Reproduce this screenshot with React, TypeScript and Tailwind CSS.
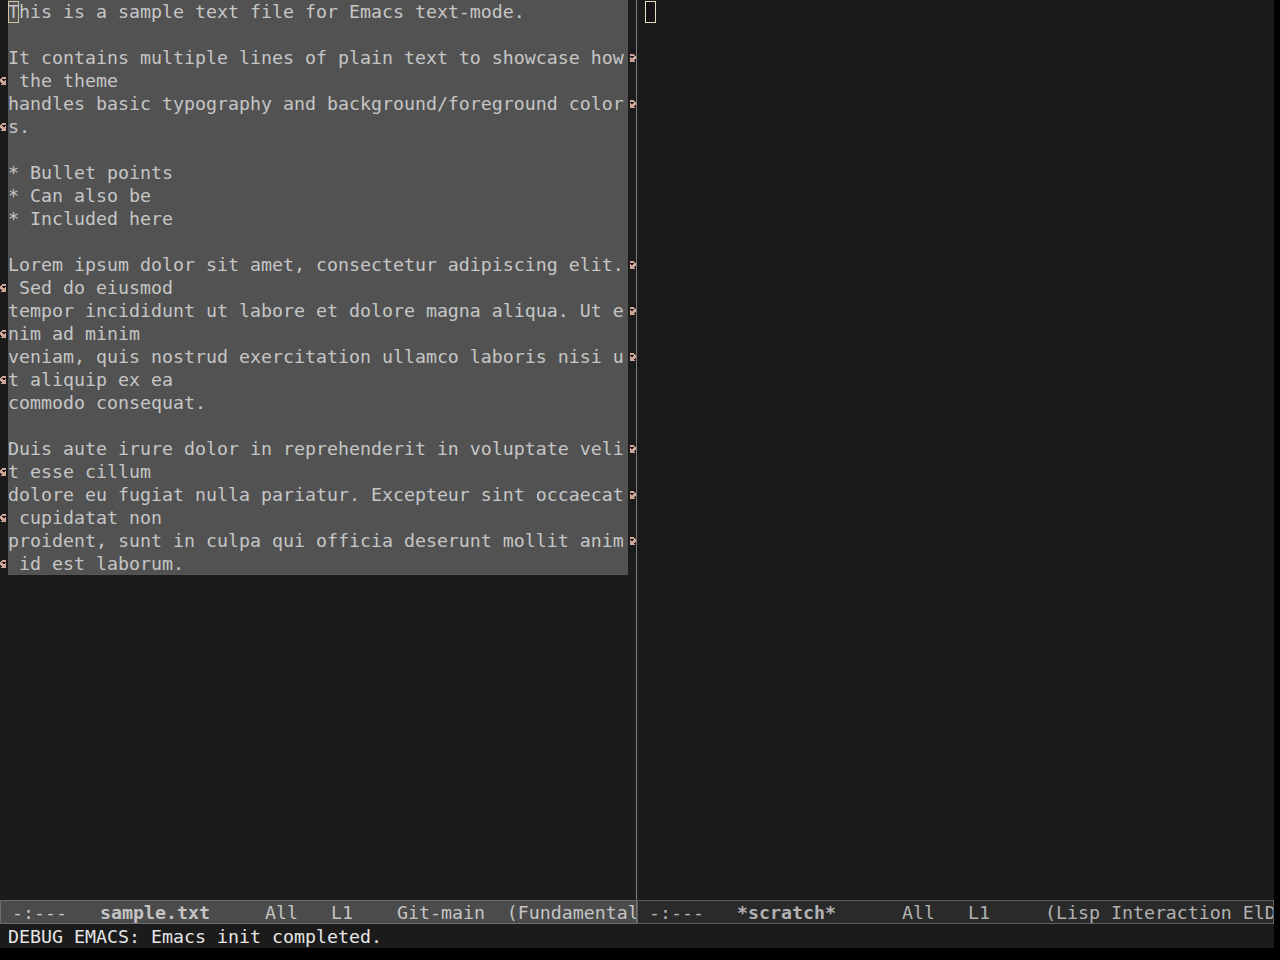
const lines: { t: string; l?: boolean; r?: boolean }[] = [
  { t: "This is a sample text file for Emacs text-mode." },
  { t: "" },
  { t: "It contains multiple lines of plain text to showcase how", r: true },
  { t: " the theme", l: true },
  { t: "handles basic typography and background/foreground color", r: true },
  { t: "s.", l: true },
  { t: "" },
  { t: "* Bullet points" },
  { t: "* Can also be" },
  { t: "* Included here" },
  { t: "" },
  { t: "Lorem ipsum dolor sit amet, consectetur adipiscing elit.", r: true },
  { t: " Sed do eiusmod", l: true },
  { t: "tempor incididunt ut labore et dolore magna aliqua. Ut e", r: true },
  { t: "nim ad minim", l: true },
  { t: "veniam, quis nostrud exercitation ullamco laboris nisi u", r: true },
  { t: "t aliquip ex ea", l: true },
  { t: "commodo consequat." },
  { t: "" },
  { t: "Duis aute irure dolor in reprehenderit in voluptate veli", r: true },
  { t: "t esse cillum", l: true },
  { t: "dolore eu fugiat nulla pariatur. Excepteur sint occaecat", r: true },
  { t: " cupidatat non", l: true },
  { t: "proident, sunt in culpa qui officia deserunt mollit anim", r: true },
  { t: " id est laborum.", l: true },
]

// emacs fringe bitmaps, msb = leftmost pixel
const leftCurly = [0x3c, 0x7c, 0xc0, 0xe4, 0xfc, 0x7c, 0x3c, 0x7c]
const rightCurly = [0x3c, 0x3e, 0x03, 0x27, 0x3f, 0x3e, 0x3c, 0x3e]

function FringeBitmap({ bits }: { bits: number[] }) {
  const rects: JSX.Element[] = []
  bits.forEach((row, y) => {
    for (let x = 0; x < 8; x++) {
      if (row & (0x80 >> x)) rects.push(<rect key={`${x}-${y}`} x={x} y={y} width={1} height={1} />)
    }
  })
  return (
    <svg width="8" height="8" viewBox="0 0 8 8" fill="#cfa597" shapeRendering="crispEdges">
      {rects}
    </svg>
  )
}

const mono = "font-['DejaVu_Sans_Mono',monospace] text-[18.27px] whitespace-pre"

export default function App() {
  return (
    <div className="w-[1280px] h-[960px] bg-black overflow-hidden">
      <div className={`w-[1274px] h-[948px] bg-[#1b1b1b] flex flex-col ${mono}`}>
        {/* windows */}
        <div className="flex h-[900px]">
          {/* left window: sample.txt */}
          <div className="w-[636px] flex flex-col">
            {lines.map((ln, i) => (
              <div key={i} className="flex h-[23px] leading-[23px]">
                <div className="w-[8px] flex items-center">
                  {ln.l && <FringeBitmap bits={leftCurly} />}
                </div>
                <div className="w-[620px] bg-[#525252] text-[#c6c6c6] overflow-hidden">
                  {i === 0 ? (
                    <>
                      <span className="inline-block align-top w-[11px] h-[22px] mt-[1px] leading-[21px] shadow-[inset_0_0_0_1px_#cfc6a6]">T</span>
                      {ln.t.slice(1)}
                    </>
                  ) : (
                    ln.t
                  )}
                </div>
                <div className="w-[8px] flex items-center">
                  {ln.r && <FringeBitmap bits={rightCurly} />}
                </div>
              </div>
            ))}
          </div>
          <div className="w-[1px] bg-[#7c7c7c]" />
          {/* right window: *scratch* */}
          <div className="flex-1 pl-[8px]">
            <div className="w-[11px] h-[22px] mt-[1px] bg-[#15121a] shadow-[inset_0_0_0_1px_#e6dfc0]" />
          </div>
        </div>

        {/* mode lines */}
        <div className="flex h-[24px] leading-[22px]">
          <div className="w-[637px] pt-[1px] bg-[#4b4b4b] border border-[#6c6c6c] text-[#c4c4c4] overflow-hidden">
            {" -:---   "}
            <span className="font-bold">sample.txt</span>
            {"     All   L1    Git-main  (Fundamental"}
          </div>
          <div className="flex-1 pt-[1px] bg-[#2a2a2a] border border-[#5e5e5e] text-[#b2b2b2] overflow-hidden">
            {" -:---   "}
            <span className="font-bold">*scratch*</span>
            {"      All   L1     (Lisp Interaction ElD"}
          </div>
        </div>

        {/* echo area */}
        <div className="h-[24px] leading-[24px] pt-[1px] pl-[8px] text-[#e6e6e6]">DEBUG EMACS: Emacs init completed.</div>
      </div>
    </div>
  )
}
